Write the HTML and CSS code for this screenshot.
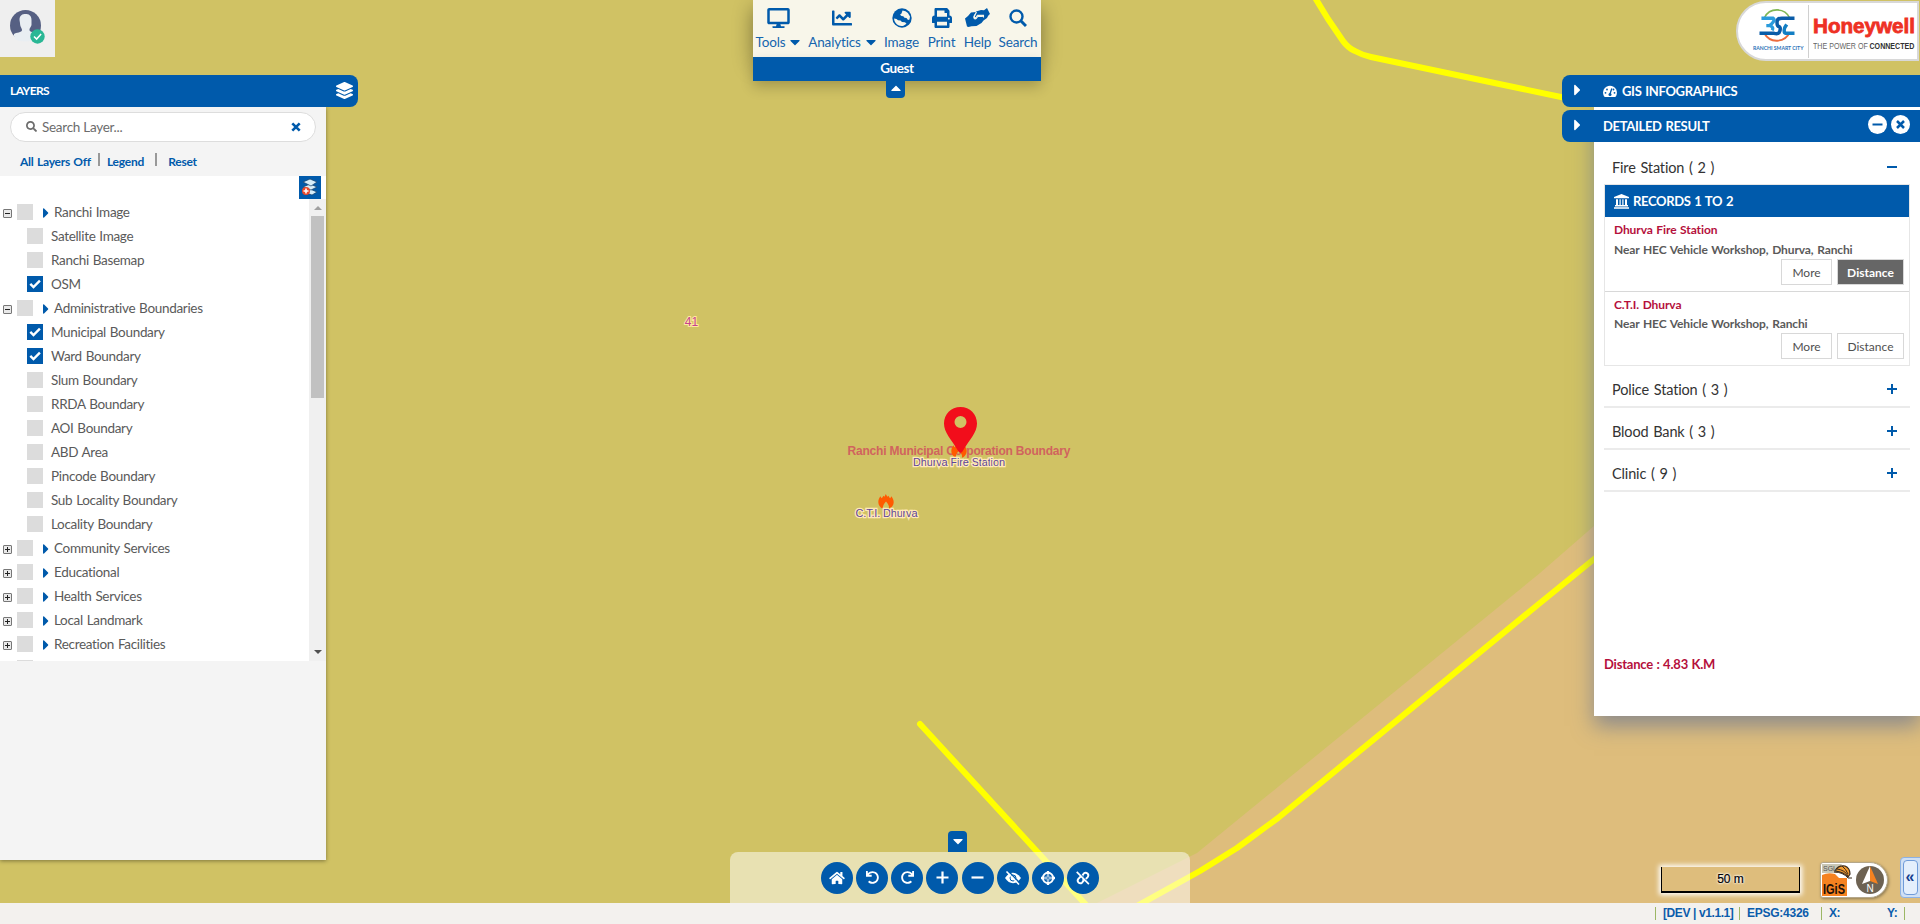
FILE: index.html
```html
<!DOCTYPE html>
<html lang="en">
<head>
<meta charset="utf-8">
<title>Ranchi GIS</title>
<link rel="stylesheet" href="styles.css">
</head>
<body>
<svg width="0" height="0" class="defs">
  <symbol id="right" viewBox="0 0 192 512"><path d="M0 384.662V127.338c0-17.818 21.543-26.741 34.142-14.142l128.662 128.662c7.81 7.81 7.81 20.474 0 28.284L34.142 398.804C21.543 411.404 0 402.48 0 384.662z"/></symbol>
  <symbol id="down" viewBox="0 0 320 512"><path d="M31.3 192h257.3c17.8 0 26.7 21.5 14.1 34.1L174.1 354.8c-7.8 7.8-20.5 7.8-28.3 0L17.2 226.1C4.6 213.5 13.5 192 31.3 192z"/></symbol>
  <symbol id="search" viewBox="0 0 512 512"><path d="M505 442.7L405.3 343c-4.5-4.5-10.6-7-17-7H372c27.6-35.3 44-79.7 44-128C416 93.1 322.9 0 208 0S0 93.1 0 208s93.1 208 208 208c48.3 0 92.7-16.4 128-44v16.3c0 6.4 2.5 12.5 7 17l99.7 99.7c9.4 9.4 24.6 9.4 33.9 0l28.3-28.3c9.4-9.4 9.4-24.6.1-34zM208 336c-70.7 0-128-57.2-128-128 0-70.7 57.2-128 128-128 70.7 0 128 57.2 128 128 0 70.7-57.2 128-128 128z"/></symbol>
  <symbol id="layers" viewBox="0 0 512 512"><path d="M12.41 148.02l232.94 105.67c6.8 3.09 14.49 3.09 21.29 0l232.94-105.67c16.55-7.51 16.55-32.52 0-40.03L266.65 2.31a25.607 25.607 0 0 0-21.29 0L12.41 107.98c-16.55 7.51-16.55 32.53 0 40.04zm487.18 88.28l-58.09-26.33-161.64 73.27c-7.56 3.43-15.59 5.17-23.86 5.17s-16.29-1.74-23.86-5.17L70.51 209.97l-58.1 26.33c-16.55 7.5-16.55 32.5 0 40l232.94 105.59c6.8 3.08 14.49 3.08 21.29 0L499.59 276.3c16.55-7.5 16.55-32.5 0-40zm0 127.8l-57.87-26.23-161.86 73.37c-7.56 3.43-15.59 5.17-23.86 5.17s-16.29-1.74-23.86-5.17L70.29 337.87 12.41 364.1c-16.55 7.5-16.55 32.5 0 40l232.94 105.59c6.8 3.08 14.49 3.08 21.29 0L499.59 404.1c16.55-7.5 16.55-32.5 0-40z"/></symbol>
  <symbol id="undo" viewBox="0 0 512 512"><path d="M212.333 224.333H12c-6.627 0-12-5.373-12-12V12C0 5.373 5.373 0 12 0h48c6.627 0 12 5.373 12 12v78.112C117.773 39.279 184.26 7.47 258.175 8.007c136.906.994 246.448 111.623 246.157 248.532C504.041 393.258 393.12 504 256.333 504c-64.089 0-122.496-24.313-166.51-64.215-5.099-4.622-5.334-12.554-.467-17.42l33.967-33.967c4.474-4.474 11.662-4.717 16.401-.525C170.76 415.336 211.58 432 256.333 432c97.268 0 176-78.716 176-176 0-97.267-78.716-176-176-176-58.496 0-110.28 28.476-142.274 72.333h98.274c6.627 0 12 5.373 12 12v48c0 6.627-5.373 12-12 12z"/></symbol>
  <symbol id="flame" viewBox="0 0 16 15"><path fill="#ff5a00" d="M.3 8C.3 5.500 1.500 4 2.300 2.300l1.300 1.900C4.300 3.500 5 2.800 5.200 1.700l1.300 1L7.800 0l1.500 2.700 1.300-1c.2 1.100.9 1.800 1.600 2.500l1.300-1.900c.8 1.700 2.200 3.200 2.200 5.700 0 3.200-1.700 5.500-4.700 6.800.4-3-.9-4.800-3-7.300-2.200 2.500-3.500 4.300-3 7.300C2 13.500.3 11.200.3 8z"/></symbol>
  <symbol id="check" viewBox="0 0 16 16"><path fill="none" stroke="#fff" stroke-width="2.400" d="M3.300 7.800l3.200 3.200 6.400-6.400"/></symbol>
</svg>

<main class="map">
  <svg class="ground" viewBox="0 0 1920 903" width="1920" height="903">
    <path d="M1097 903L1197 853 1540 573 1594 526 1920 262V903z" fill="#debd7c"/>
    <g fill="none" stroke="#ff0" stroke-width="6" stroke-linecap="round" stroke-linejoin="round">
      <path d="M1314-4l14 23 15 22q5 7 12 10 7 4 16 6L1580 101"/>
      <path d="M920 724L1088 907"/>
      <path d="M1137 906L1200 871 1237 848 1278 818 1540 603 1620 538"/>
    </g>
    <g class="map-labels" text-anchor="middle">
      <text class="boundary" x="959" y="455" textLength="223">Ranchi Municipal Corporation Boundary</text>
      <text class="ward" x="691.500" y="325.500">41</text>
      <use href="#flame" x="951" y="443" width="16" height="15"/>
      <text class="place" x="959" y="466" textLength="92">Dhurva Fire Station</text>
      <use href="#flame" x="878" y="494" width="16" height="15"/>
      <text class="place" x="886.500" y="517" textLength="62">C.T.I. Dhurva</text>
    </g>
    <path fill="#f20d1b" fill-rule="evenodd" d="M960.500 407c9.500 0 16.500 7.300 16.500 16.500 0 9-7 15.500-14.500 28q-2 2.500-4 0c-7.500-12.500-14.500-19-14.500-28 0-9.200 7-16.500 16.500-16.500zm0 9a6 6 0 1 0 0 12 6 6 0 0 0 0-12z"/>
  </svg>

  <div class="user">
    <svg viewBox="0 0 36 36" width="36" height="36">
      <circle cx="16.500" cy="16.500" r="15.500" fill="#566083"/>
      <path fill="#e9eef2" d="M10.500 11c0-5 3-6 6-6s6 1 6 6v5c-1 3-2 3-2 5 0 3 7 2 8 4v8H6v-5c-2-1-1-1-1-3 2-2 8-1 8-4 0-2-2-3-2-7z"/>
      <path fill="#efefef" d="M5 30q11 5 23 0v6H5z"/>
      <circle cx="28.500" cy="27.500" r="7.200" fill="#2ab795"/>
      <path d="M25 27.500l2.600 2.600 4.500-5" fill="none" stroke="#fff" stroke-width="1.500"/>
    </svg>
  </div>

  <section class="layers">
    <header class="bar layers-bar"><span class="bar-title small">LAYERS</span><svg class="w" width="17" height="17"><use href="#layers"/></svg></header>
    <div class="layers-body">
      <div class="searchbox">
        <svg width="11" height="11" class="grey"><use href="#search"/></svg><span>Search Layer...</span>
        <svg class="clear" width="10" height="10" viewBox="0 0 10 10"><path d="M1.300 1.300l7.400 7.400m0-7.400l-7.400 7.400" stroke="#005aab" stroke-width="2.600"/></svg>
      </div>
      <nav class="links"><a>All Layers Off</a><i></i><a>Legend</a><i class="wide"></i><a>Reset</a></nav>
      <div class="tree-wrap">
        <div class="tree-tools"><b class="add"><svg viewBox="0 0 22 23" width="22" height="23"><g fill="#d5edfa" stroke="#163f68" stroke-width=".7"><path d="M5 16l6-3 7 3-5 3z"/><path d="M4 11l7-3 7 3-6 3z"/><path d="M4 6l7-3 7 3-6 4z"/></g><circle cx="7" cy="15" r="4" fill="#e8492c"/><path d="M7 12.500v5M4.500 15h5" stroke="#fff" stroke-width="1.600"/></svg></b></div>
        <div class="tree-row">
          <ul class="tree">
            <li class="group"><i class="tog"></i><i class="box"></i><svg><use href="#right"/></svg><span>Ranchi Image</span></li>
            <li><i class="box"></i><span>Satellite Image</span></li>
            <li><i class="box"></i><span>Ranchi Basemap</span></li>
            <li><i class="box on"><svg><use href="#check"/></svg></i><span>OSM</span></li>
            <li class="group"><i class="tog"></i><i class="box"></i><svg><use href="#right"/></svg><span>Administrative Boundaries</span></li>
            <li><i class="box on"><svg><use href="#check"/></svg></i><span>Municipal Boundary</span></li>
            <li><i class="box on"><svg><use href="#check"/></svg></i><span>Ward Boundary</span></li>
            <li><i class="box"></i><span>Slum Boundary</span></li>
            <li><i class="box"></i><span>RRDA Boundary</span></li>
            <li><i class="box"></i><span>AOI Boundary</span></li>
            <li><i class="box"></i><span>ABD Area</span></li>
            <li><i class="box"></i><span>Pincode Boundary</span></li>
            <li><i class="box"></i><span>Sub Locality Boundary</span></li>
            <li><i class="box"></i><span>Locality Boundary</span></li>
            <li class="group"><i class="tog plus"></i><i class="box"></i><svg><use href="#right"/></svg><span>Community Services</span></li>
            <li class="group"><i class="tog plus"></i><i class="box"></i><svg><use href="#right"/></svg><span>Educational</span></li>
            <li class="group"><i class="tog plus"></i><i class="box"></i><svg><use href="#right"/></svg><span>Health Services</span></li>
            <li class="group"><i class="tog plus"></i><i class="box"></i><svg><use href="#right"/></svg><span>Local Landmark</span></li>
            <li class="group"><i class="tog plus"></i><i class="box"></i><svg><use href="#right"/></svg><span>Recreation Facilities</span></li>
            <li class="group"><i class="tog none"></i><i class="box"></i></li>
          </ul>
          <div class="scroll"><i class="up"></i><i class="thumb"></i><i class="dn"></i></div>
        </div>
      </div>
    </div>
  </section>

  <section class="toolbar">
    <div class="tools">
      <div class="tool t1"><svg width="23" height="20" viewBox="0 0 576 512"><path d="M528 0H48C21.500 0 0 21.500 0 48v320c0 26.500 21.500 48 48 48h192l-16 48h-72c-13.300 0-24 10.700-24 24s10.700 24 24 24h272c13.300 0 24-10.700 24-24s-10.700-24-24-24h-72l-16-48h192c26.500 0 48-21.500 48-48V48c0-26.500-21.500-48-48-48zm-16 352H64V64h448v288z"/></svg><p><span>Tools</span><svg class="car" width="10" height="16"><use href="#down"/></svg></p></div>
      <div class="tool t2"><svg width="20" height="20" viewBox="0 0 512 512"><path d="M496 384H64V80c0-8.840-7.160-16-16-16H16C7.160 64 0 71.160 0 80v336c0 17.670 14.330 32 32 32h464c8.840 0 16-7.160 16-16v-32c0-8.840-7.160-16-16-16zM464 96H345.940c-21.380 0-32.090 25.850-16.970 40.970l32.400 32.400L288 242.750l-73.370-73.370c-12.500-12.500-32.760-12.500-45.250 0l-68.690 68.690c-6.250 6.250-6.250 16.380 0 22.630l22.620 22.620c6.250 6.250 16.380 6.250 22.630 0L192 237.250l73.370 73.370c12.500 12.500 32.760 12.500 45.250 0l96-96 32.400 32.400c15.120 15.120 40.970 4.410 40.970-16.970V112c.01-8.840-7.150-16-15.990-16z"/></svg><p><span>Analytics</span><svg class="car" width="10" height="16"><use href="#down"/></svg></p></div>
      <div class="tool t3"><svg width="20" height="20" viewBox="0 0 20 20"><circle cx="10" cy="10" r="9.700"/><path fill="#f8f6ea" d="M10.500 2.600l3 .7q3.500 1.600 4.500 5.200l-.5 3-1.500.5-1.500-2-2-.3-1.200-1.500-1.800-.2L8 6.800l1.500-1.300zM2 10.500l2.500.5 1.500 1.200 2.500.3L10 14l3 .3 1.500 1.500-3 2q-5 .9-8-3Q2.200 13 2 10.500z"/></svg><p>Image</p></div>
      <div class="tool t4"><svg width="20" height="20" viewBox="0 0 512 512"><path d="M448 192V77.250c0-8.490-3.370-16.620-9.370-22.630L393.370 9.370c-6-6-14.140-9.370-22.630-9.370H96C78.330 0 64 14.330 64 32v160c-35.350 0-64 28.650-64 64v112c0 8.840 7.160 16 16 16h48v96c0 17.670 14.330 32 32 32h320c17.670 0 32-14.330 32-32v-96h48c8.840 0 16-7.160 16-16V256c0-35.350-28.650-64-64-64zm-64 256H128v-96h256v96zm0-224H128V64h192v48c0 8.840 7.160 16 16 16h48v96zm48 72c-13.250 0-24-10.750-24-24 0-13.260 10.750-24 24-24s24 10.740 24 24c0 13.250-10.750 24-24 24z"/></svg><p>Print</p></div>
      <div class="tool t5"><svg width="25" height="20" viewBox="0 0 25 20"><path d="M0 10.500L3 8l3-3.500 5-.5-2.500 4c-1 3 1.500 4 3 3l1.500-2h4.500l2-2 4 0-1.500 3-3.500 2.500-2 2.500-5 3-5 .3-3 .7L2 18.500z"/><path d="M11 3.500L16 2l3 .3L22 0l3 6-3 2.500-2.500 1.500-.5-3h-6l-1.500 2.500c-1.500.5-2-.5-1.500-1.500z"/><path d="M18.500 9.500v-2.300h-6L11 9.500c-1.500.7-2-.5-1.500-1.500l2-4" fill="none" stroke="#f8f6ea" stroke-width="1.100"/></svg><p>Help</p></div>
      <div class="tool t6"><svg width="18" height="18" viewBox="0 0 18 18"><circle cx="7.500" cy="7.500" r="6" fill="none" stroke="#005aab" stroke-width="2.400"/><path d="M12 12l5 5" stroke="#005aab" stroke-width="3"/></svg><p>Search</p></div>
    </div>
    <div class="guest">Guest</div>
    <div class="tab"><svg width="10" height="16"><use href="#down"/></svg></div>
  </section>

  <div class="brand">
    <div class="city"><svg width="40" height="36" viewBox="0 0 40 36" fill="none">
      <path d="M7 9A14.500 14.500 0 0 1 33 9" stroke="#7fb653" stroke-width="1.600"/><path d="M7 25a14.500 14.500 0 0 0 26-1" stroke="#ec6b3c" stroke-width="2"/>
      <path d="M4 9.500h12q2 1 0 4t-4 3.500H9m4 0q4 2 2 5" stroke="#2a9bdc" stroke-width="3.400"/><path d="M38 9.500H25q-5 0-5 4t2 4.500 1 4.500-6 2.500H2" stroke="#0a5ca8" stroke-width="3.600"/><path d="M30 16l-2 3q-2 6 2 6h8" stroke="#137fc4" stroke-width="3.600"/></svg><span>RANCHI SMART CITY</span></div>
    <svg class="honey" width="106" height="38"><text class="hw" x="0" y="18" textLength="102" lengthAdjust="spacingAndGlyphs">Honeywell</text><g transform="translate(0 34) scale(1 1.35)"><text class="pw" x="0" y="0">THE POWER OF</text><text class="pw bold" x="56.500" y="0">CONNECTED</text></g></svg>
  </div>

  <section class="results">
    <header class="bar res-bar"><svg class="w arrow" width="7" height="18"><use href="#right"/></svg><svg class="gauge" width="14" height="13" viewBox="0 0 14 13"><path fill="#fff" d="M7 .8a7 7 0 0 0-6 10.500q.5.700 1 .7h10q.5 0 1-.7A7 7 0 0 0 7 .8z"/><path stroke="#005aab" stroke-width="1.300" d="M6.800 9.500l2-6"/><g fill="#005aab"><circle cx="7" cy="9.500" r="1.500"/><circle cx="2.500" cy="7.800" r=".9"/><circle cx="4" cy="4.500" r=".9"/><circle cx="11.500" cy="7.800" r=".9"/><circle cx="10.500" cy="4.500" r=".9"/></g></svg><span class="bar-title">GIS INFOGRAPHICS</span></header>
    <header class="bar res-bar"><svg class="w arrow" width="7" height="18"><use href="#right"/></svg><span class="bar-title t">DETAILED RESULT</span>
      <b class="round"><svg width="19" height="19" viewBox="0 0 19 19"><path d="M4.500 9.500h10" stroke="#005aab" stroke-width="2"/></svg></b><b class="round"><svg width="19" height="19" viewBox="0 0 19 19"><path d="M6 6l7 7m0-7l-7 7" stroke="#005aab" stroke-width="2.500"/></svg></b></header>
    <div class="res-body">
      <div class="cat first"><span>Fire Station ( 2 )</span><i class="sign"></i></div>
      <div class="records">
        <h3><svg width="15" height="15" viewBox="0 0 15 15"><path fill="#fff" d="M7.500 0L15 3v1.300H0V3zM2 5.200h2V11h1.500V5.200h1.200V11h1.600V5.200h1.200V11H11V5.200h2V11h1v1.500H1V11h1zM0 13.300h15v1.500H0z"/></svg><span>RECORDS 1 TO 2</span></h3>
        <article><h4>Dhurva Fire Station</h4><p><span>Near HEC Vehicle Workshop, Dhurva, Ranchi</span></p><div class="btns"><button><span>More</span></button><button class="active"><span>Distance</span></button></div></article>
        <article class="second"><h4>C.T.I. Dhurva</h4><p><span>Near HEC Vehicle Workshop, Ranchi</span></p><div class="btns"><button><span>More</span></button><button><span>Distance</span></button></div></article>
      </div>
      <div class="cat line"><span>Police Station ( 3 )</span><i class="sign p"></i></div>
      <div class="cat line"><span>Blood Bank ( 3 )</span><i class="sign p"></i></div>
      <div class="cat line"><span>Clinic ( 9 )</span><i class="sign p"></i></div>
      <p class="dist">Distance : 4.83 K.M</p>
    </div>
  </section>

  <section class="nav">
    <div class="tab"><svg width="10" height="16"><use href="#down"/></svg></div>
    <div class="nav-body">
      <b><svg viewBox="0 0 576 512"><path d="M280.370 148.260L96 300.110V464a16 16 0 0 0 16 16l112.060-.29a16 16 0 0 0 15.920-16V368a16 16 0 0 1 16-16h64a16 16 0 0 1 16 16v95.640a16 16 0 0 0 16 16.050L464 480a16 16 0 0 0 16-16V300L295.670 148.260a12.190 12.190 0 0 0-15.300 0zM571.600 251.470L488 182.560V44.050a12 12 0 0 0-12-12h-56a12 12 0 0 0-12 12v72.610L318.470 43a48 48 0 0 0-61 0L4.340 251.470a12 12 0 0 0-1.600 16.900l25.500 31A12 12 0 0 0 45.150 301l235.220-193.740a12.190 12.190 0 0 1 15.300 0L530.900 301a12 12 0 0 0 16.900-1.600l25.500-31a12 12 0 0 0-1.700-16.930z"/></svg></b>
      <b><svg class="s13"><use href="#undo"/></svg></b>
      <b><svg class="s13 flip"><use href="#undo"/></svg></b>
      <b><svg class="s13" viewBox="0 0 13 13"><path d="M6.500.5v12M.5 6.500h12" stroke="#fff" stroke-width="2.200"/></svg></b>
      <b><svg class="s13" viewBox="0 0 13 13"><path d="M.5 6.500h12" stroke="#fff" stroke-width="2.200"/></svg></b>
      <b><svg viewBox="0 0 16 14"><path d="M0 7Q3.500 1.800 8 1.800T16 7q-3.500 5.200-8 5.200T0 7z"/><circle cx="8" cy="7" r="3" fill="none" stroke="#005aab" stroke-width="1"/><path d="M3-.2l12 12.500" stroke="#005aab" stroke-width="1.500"/><path d="M1.500.5l12.500 13" stroke="#fff" stroke-width="1.600"/></svg></b>
      <b><svg viewBox="0 0 14 14" class="s14"><circle cx="7" cy="7" r="5.200" fill="none" stroke="#fff" stroke-width="1.900"/><path d="M7 0v14M0 7h14" stroke="#fff" stroke-width="2.300"/><path d="M7 3v8M3 7h8" stroke="#005aab" stroke-width=".8"/></svg></b>
      <b><svg viewBox="0 0 15 14" class="s14"><g fill="none" stroke="#fff" stroke-width="2"><path d="M6.500 4.500l2-2.500q2-1.500 3.800.2t.2 3.800L10 8.500q-1.500 1-3 0"/><path d="M8.500 9.500l-2 2.500q-2 1.500-3.800-.2t-.2-3.800L5 5.500q1.500-1 3 0"/></g><path d="M1.500-.3l12.500 13" stroke="#005aab" stroke-width="1.500"/><path d="M.8.500l13 13" stroke="#fff" stroke-width="1.800"/></svg></b>
    </div>
  </section>

  <div class="scale"><span>50 m</span></div>

  <div class="igis"><svg width="66" height="34" viewBox="0 0 66 34">
    <path fill="#c9c7b5" d="M1 1h20L16 10H1z"/><path fill="#f58220" d="M1 12q6-3 13-1l4 4h8v18H1z"/>
    <path fill="#f29a2e" stroke="#3b2a1a" stroke-width="1.200" d="M14 8Q17 2 24 3q5 2 5 8l-2 3q-4-5-13-6z"/><path d="M16 6q8 1 11 7M21 3q4 3 6 8M13 9q9 0 14 6h4" fill="none" stroke="#3b2a1a"/>
    <text class="sgl" x="2" y="8">SGL</text><text class="ig" x="2" y="31" textLength="22" lengthAdjust="spacingAndGlyphs">IGiS</text>
    <circle cx="49" cy="17" r="14" fill="#6d6252"/><path fill="#fff" d="M49 3l-8 18 8-3z"/><path fill="#f58220" d="M49 3l8 18-8-3z"/><text class="n" x="45.500" y="29">N</text></svg></div>

  <div class="expand"><b>«</b></div>
</main>
<footer class="status"><span class="s1">[DEV | v1.1.1]</span><span class="s2">EPSG:4326</span><span class="s3">X:</span><span class="s4">Y:</span><span class="s5"></span></footer>
</body>
</html>
```

FILE: styles.css
```css
* { box-sizing: border-box; margin: 0; padding: 0; }
body { width: 1920px; height: 924px; overflow: hidden; font-family: Lato, Carlito, sans-serif; font-size: 13.5px; color: #5a5a5a; display: flex; flex-direction: column; }
svg { display: block; flex: none; }
i { font-style: normal; }
.defs { position: absolute; }
.map { position: relative; height: 903px; background: #d0c264; overflow: hidden; }
.ground { position: absolute; inset: 0; }
.map-labels text { font-family: "Liberation Sans", Arial, sans-serif; paint-order: stroke; }
.map-labels .boundary { font-size: 12px; font-weight: bold; fill: #d0645e; }
.map-labels .ward { font-size: 12px; fill: #c5438f; stroke: #ffe9a0; stroke-width: 2px; }
.map-labels .place { font-size: 11px; fill: #5d4598; stroke: #ffe9b8; stroke-width: 2.5px; }
.user { position: absolute; left: 0; top: 0; width: 55px; height: 57px; background: #efefef; padding: 9px 0 0 9px; }
.w { fill: #fff; }

.bar { display: flex; align-items: center; height: 32px; background: #005aab; color: #fff; }
.bar-title { font-weight: bold; font-size: 13px; letter-spacing: -.33px; word-spacing: 1px; }
.bar-title.small { font-size: 12px; letter-spacing: -.6px; }

.layers { position: absolute; left: 0; top: 75px; width: 358px; }
.layers-bar { border-radius: 0 8px 8px 0; padding: 0 5px 1px 10px; justify-content: space-between; position: relative; z-index: 1; }
.layers-body { width: 326px; height: 753px; background: #f4f4f4; padding-top: 5px; box-shadow: 0 1px 4px rgba(0,0,0,.4); }
.searchbox { margin-left: 10px; width: 306px; height: 30px; border: 1px solid #ddd; border-radius: 15px; background: #fff; display: flex; align-items: center; padding: 0 14px 1px 15px; color: #6c6c6c; }
.searchbox span { margin-left: 5px; flex: 1; letter-spacing: -.28px; }
.grey { fill: #6c6c6c; }
.links { display: flex; padding: 11px 0 0 20px; height: 34px; color: #005aab; font-size: 12px; font-weight: bold; letter-spacing: -.22px; word-spacing: .6px; line-height: 18px; }
.links i { width: 2px; height: 13px; background: #999; margin: 0 7px; }
.links i.wide { margin: 0 11px; }
.tree-wrap { height: 485px; background: #fff; display: flex; flex-direction: column; overflow: hidden; }
.tree-tools { height: 23px; display: flex; justify-content: flex-end; padding-right: 5px; }
.add { background: #005aab; width: 22px; height: 23px; }
.tree-row { display: flex; height: 462px; }
.tree { list-style: none; flex: 1; padding-top: 1px; letter-spacing: -.32px; word-spacing: .7px; overflow: hidden; }
.tree li { display: flex; align-items: center; height: 24px; padding-left: 27px; }
.tree li span { margin-left: 8px; line-height: 22px; padding-bottom: 0; }
.tree li.group { padding-left: 3px; }
.tree li > svg { width: 6px; height: 16px; fill: #005aab; margin: 2px 0 0 10px; }
.tree li.group span { margin-left: 5px; }
.box { width: 16px; height: 16px; background: #dcdcdc; flex: none; }
.box.on { background: #005aab; }
.box svg { width: 16px; height: 16px; }
.tog { width: 9px; height: 9px; margin: 3px 5px 0 0; border: 1px solid #777; border-radius: 1px; background: linear-gradient(#222,#222) center/5px 1px no-repeat, #e9e9e9; }
.tog.plus { background: linear-gradient(#222,#222) center/5px 1px no-repeat, linear-gradient(#222,#222) center/1px 5px no-repeat, #e9e9e9; }
.tog.none { visibility: hidden; }
.scroll { width: 17px; background: #f0f0f0; display: flex; flex-direction: column; align-items: center; }
.up { margin-top: 7px; border: 4px solid transparent; border-top: 0; border-bottom-color: #a0a0a0; }
.thumb { width: 13px; height: 182px; margin-top: 6px; background: #c1c1c1; }
.dn { margin-top: auto; margin-bottom: 7px; border: 4px solid transparent; border-bottom: 0; border-top-color: #505050; }

.toolbar { position: absolute; left: 753px; top: 0; width: 288px; color: #1565ae; }
.tools { height: 57px; background: #f8f6ea; display: flex; box-shadow: 0 8px 20px rgba(0,0,0,.4); }
.tool { display: flex; flex: none; flex-direction: column; align-items: center; padding-top: 8px; letter-spacing: -.15px; font-size: 13.5px; fill: #005aab; }
.tool p { display: flex; margin-top: 6px; line-height: 16px; white-space: nowrap; }
.car { margin-left: 5px; }
.tool > svg { height: 20px; }
.t1 { width: 50px; } .t2 { width: 78px; } .t3 { width: 41px; } .t4 { width: 39px; } .t5 { width: 33px; } .t6 { width: 47px; padding-left: 1px; }
.guest { position: relative; height: 24px; background: #005aab; color: #fff; text-align: center; line-height: 23px; font-size: 13.5px; font-weight: bold; letter-spacing: -.4px; box-shadow: 0 6px 14px rgba(0,0,0,.2); }
.tab { position: relative; width: 19px; height: 17px; background: #005aab; border-radius: 0 0 4px 4px; fill: #fff; padding-left: 5px; }
.toolbar .tab { margin-left: 133px; }
.toolbar .tab svg { transform: rotate(180deg); }

.brand { position: absolute; left: 1736px; top: 1px; width: 183px; height: 60px; background: #fff; border: 2px solid #d8d8d8; border-radius: 30px 0 0 30px; display: flex; }
.city { flex: none; width: 71px; margin-top: 2px; height: 53px; padding: 4px 0 0 15px; border-right: 1px solid #d0d0d0; color: #2b73b8; }
.city svg { margin-left: 4px; height: 35px; }
.city span { display: block; font-size: 5.1px; font-weight: bold; white-space: nowrap; line-height: 8px; }
.honey { margin: 12px 0 0 4px; height: 40px; }
.hw { font-family: "Liberation Sans", Arial, sans-serif; font-size: 20.5px; font-weight: bold; fill: #ee3124; stroke: #ee3124; stroke-width: .8px; }
.pw { font-family: "Liberation Sans", Arial, sans-serif; font-size: 7.1px; fill: #666; }
.pw.bold { font-weight: bold; fill: #333; }

.results { position: absolute; left: 1562px; top: 75px; width: 358px; }
.results::before { content: ""; position: absolute; left: 32px; right: 0; top: 32px; height: 609px; background: #fff; box-shadow: 0 10px 20px rgba(85,105,150,.6); }
.res-bar { position: relative; border-radius: 8px 0 0 8px; padding: 0 10px 0 12px; margin-bottom: 3px; }
.arrow { margin: -2px 22px 0 0; }
.gauge { margin: 1px 5px 0 0; }
.bar-title.t { flex: 1; }
.round { width: 19px; height: 19px; border-radius: 50%; background: #fff; margin: -3px 0 0 4px; }
.res-body { position: relative; margin: -3px 0 0 32px; height: 574px; padding: 10px 10px 0; }
.cat { display: flex; justify-content: space-between; align-items: center; padding: 0 13px 2px 8px; font-size: 14.5px; color: #333; height: 42px; letter-spacing: -.15px; word-spacing: 1.2px; }
.cat.first { height: 32px; }
.cat.line { border-bottom: 2px solid #ebebeb; padding-top: 8px; }
.sign { width: 10px; height: 10px; background: linear-gradient(#005aab,#005aab) center/10px 2px no-repeat; }
.sign.p { background: linear-gradient(#005aab,#005aab) center/10px 2px no-repeat, linear-gradient(#005aab,#005aab) center/2px 10px no-repeat; }
.records { border: 1px solid #e6e6e6; height: 182px; }
.records h3 { display: flex; align-items: center; height: 32px; background: #005aab; color: #fff; font-size: 13px; letter-spacing: -.35px; word-spacing: 1px; padding-left: 9px; }
.records h3 span { margin-left: 4px; }
article { height: 75px; padding: 4px 5px 0 9px; border-bottom: 1px solid #d8d8d8; font-size: 12px; }
article.second { border: 0; }
article h4 { color: #b5103c; font-size: 12px; line-height: 18px; letter-spacing: -.1px; word-spacing: .8px; }
article p { font-weight: bold; line-height: 21px; height: 20px; letter-spacing: -.12px; word-spacing: .9px; }
.second p { line-height: 20px; height: 19px; }
.btns { display: flex; justify-content: flex-end; gap: 5px; }
.btns button { font: 12px Lato, sans-serif; width: 51px; height: 26px; border: 1px solid #d8d8d8; background: #fff; color: #505050; }
.btns button + button { width: 67px; }
.btns .active { background: #666; color: #fff; font-weight: bold; }
.dist { margin-top: 162px; color: #b5103c; font-weight: bold; font-size: 13px; letter-spacing: -.2px; word-spacing: .5px; line-height: 20px; }

.nav { position: absolute; left: 730px; top: 831px; width: 460px; }
.nav .tab { margin-left: 218px; height: 21px; border-radius: 4px 4px 0 0; padding-top: 2px; }
.nav-body { height: 51px; border-radius: 8px 8px 0 0; background: rgba(255,255,255,.5); display: flex; gap: 3.15px; justify-content: center; padding-top: 10px; }
.nav-body b { width: 32px; height: 32px; border-radius: 50%; background: #005aab; fill: #fff; display: flex; align-items: center; justify-content: center; padding-bottom: 1px; }
.nav-body svg { width: 16px; height: 14px; overflow: visible; }
.nav-body svg.s13 { width: 13px; height: 13px; }
.nav-body svg.s14 { width: 14px; }
.flip { transform: scaleX(-1); }

.scale { position: absolute; left: 1661px; top: 867px; width: 139px; height: 26px; border: solid #000; border-width: 0 1px 2px; box-shadow: 0 0 5px 2px #fff; text-align: center; font: 12px/24px "Liberation Sans", Arial, sans-serif; color: #000; -webkit-text-stroke: .2px #000; text-shadow: 0 0 2px #fff, 0 0 2px #fff, 0 0 3px #fff; }
.igis { position: absolute; left: 1820px; top: 862px; width: 68px; height: 36px; border-radius: 3px 18px 18px 3px; background: #fff; border: 1px solid #b5a78a; box-shadow: 1px 1px 3px #8d7a52; }
.sgl { font: 7px "Liberation Sans", sans-serif; fill: #555; }
.ig { font: bold 15px "Liberation Sans", sans-serif; fill: #1c1008; }
.n { font: 10px "Liberation Sans", sans-serif; fill: #fff; }
.expand { position: absolute; left: 1900px; top: 857px; width: 24px; height: 41px; border: 1px solid #8db2e3; border-radius: 4px; background: #cfe0f5; padding: 2px; }
.expand b { display: block; width: 15px; height: 35px; border: 1px solid #6f9bd8; border-radius: 4px; background: #e4effc; color: #153e90; font: bold 16px/31px "Liberation Sans", sans-serif; text-align: center; text-indent: -1px; }

.status { height: 21px; background: #f3f1ee; display: flex; align-items: center; padding-left: 1655px; font: bold 12px/13px "Liberation Sans", Arial, sans-serif; color: #0b5cab; }
.status span { border-left: 1px solid #9cb765; height: 13px; padding-left: 7px; letter-spacing: -.4px; }
.status .s2 { letter-spacing: -.25px; }
.s1 { width: 84px; } .s2 { width: 82px; } .s3 { width: 59px; }
.status .s4 { border: 0; width: 24px; }
```
